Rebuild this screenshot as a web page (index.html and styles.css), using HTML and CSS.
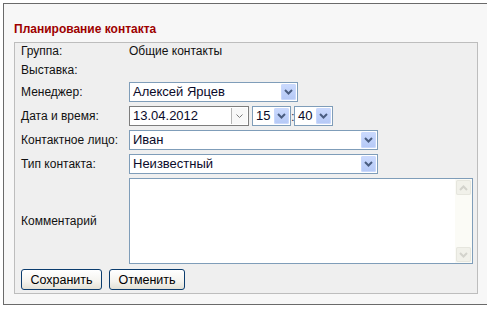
FILE: index.html
```html
<!DOCTYPE html>
<html lang="ru">
<head>
  <meta charset="UTF-8">
  <title>Планирование контакта</title>
  <link rel="stylesheet" href="styles.css">
</head>
<body>
  <div class="panel">
    <div class="title">Планирование контакта</div>

    <div class="box">
      <!-- Form rows -->
      <div class="form">
        <div class="label">Группа:</div>
        <div class="value">Общие контакты</div>

        <div class="label">Выставка:</div>
        <div class="value"></div>

        <div class="label">Менеджер:</div>
        <div class="select manager">
          <span class="select-text">Алексей Ярцев</span>
          <span class="arrow"><svg width="9" height="6" viewBox="0 0 9 6"><path d="M1 1 L4.5 4.5 L8 1" fill="none" stroke="#4a5d80" stroke-width="2"/></svg></span>
        </div>

        <div class="label">Дата и время:</div>
        <div class="datetime">
          <div class="date">
            <span class="select-text">13.04.2012</span>
            <span class="date-arrow"><svg width="7" height="5" viewBox="0 0 7 5"><path d="M0.5 0.5 L3.5 3.5 L6.5 0.5" fill="none" stroke="#7b7b7b" stroke-width="1"/></svg></span>
          </div>
          <div class="select time">
            <span class="select-text">15</span>
            <span class="arrow"><svg width="9" height="6" viewBox="0 0 9 6"><path d="M1 1 L4.5 4.5 L8 1" fill="none" stroke="#4a5d80" stroke-width="2"/></svg></span>
          </div>
          <span class="colon">:</span>
          <div class="select time">
            <span class="select-text">40</span>
            <span class="arrow"><svg width="9" height="6" viewBox="0 0 9 6"><path d="M1 1 L4.5 4.5 L8 1" fill="none" stroke="#4a5d80" stroke-width="2"/></svg></span>
          </div>
        </div>

        <div class="label">Контактное лицо:</div>
        <div class="select wide">
          <span class="select-text">Иван</span>
          <span class="arrow"><svg width="9" height="6" viewBox="0 0 9 6"><path d="M1 1 L4.5 4.5 L8 1" fill="none" stroke="#4a5d80" stroke-width="2"/></svg></span>
        </div>

        <div class="label">Тип контакта:</div>
        <div class="select wide">
          <span class="select-text">Неизвестный</span>
          <span class="arrow"><svg width="9" height="6" viewBox="0 0 9 6"><path d="M1 1 L4.5 4.5 L8 1" fill="none" stroke="#4a5d80" stroke-width="2"/></svg></span>
        </div>

        <div class="label">Комментарий</div>
        <div class="textarea">
          <div class="text-body"></div>
          <div class="scrollbar">
            <span class="scroll-btn"><svg width="9" height="6" viewBox="0 0 9 6"><path d="M1 5 L4.5 1.5 L8 5" fill="none" stroke="#d3d3cc" stroke-width="2"/></svg></span>
            <span class="scroll-btn"><svg width="9" height="6" viewBox="0 0 9 6"><path d="M1 1 L4.5 4.5 L8 1" fill="none" stroke="#d3d3cc" stroke-width="2"/></svg></span>
          </div>
        </div>
      </div>

      <!-- Buttons -->
      <div class="buttons">
        <button class="button save">Сохранить</button>
        <button class="button cancel">Отменить</button>
      </div>
    </div>
  </div>
</body>
</html>
```

FILE: styles.css
```css
body {
  margin: 3px;
  background: #ffffff;
  font-family: "Liberation Sans", Arial, sans-serif;
  font-size: 12px;
  color: #111111;
}

.panel {
  width: 486px;
  box-sizing: border-box;
  border: 1px solid #6a6a6a;
  background: #f7f7f7;
  padding: 10px;
}

.title {
  margin-top: 8px;
  margin-bottom: 6px;
  font-weight: bold;
  font-size: 12px;
  line-height: 14px;
  color: #9e0000;
}

.box {
  border: 1px solid #bdbdbd;
  background: #efefef;
  padding: 0 4px 3px 6px;
}

.form {
  display: grid;
  grid-template-columns: 108px 1fr;
  grid-template-rows: 15px 16px 20px 20px 20px 20px 86px;
  row-gap: 4px;
  align-items: center;
}

.label,
.value {
  line-height: 14px;
}

.select,
.date {
  display: flex;
  height: 20px;
  box-sizing: border-box;
  border: 1px solid #7f9db9;
  background: #ffffff;
}

.select-text {
  flex: 1;
  padding-left: 3px;
  font-size: 13px;
  line-height: 18px;
  color: #0a0a2a;
  white-space: nowrap;
  overflow: hidden;
}

.arrow {
  width: 15px;
  margin: 1px;
  border-radius: 2px;
  background: linear-gradient(#cbdafe, #b4c8f6);
  box-shadow: inset 0 0 0 1px #c9d8fc;
  display: flex;
  align-items: center;
  justify-content: center;
}

.manager {
  width: 169px;
}

.wide {
  width: 249px;
}

.datetime {
  display: flex;
  align-items: center;
}

.date {
  width: 120px;
  border-color: #7d7d7d;
}

.date-arrow {
  width: 15px;
  margin: 1px;
  border-left: 1px solid #b5b5b5;
  background: #f8f8f8;
  display: flex;
  align-items: center;
  justify-content: center;
}

.time {
  width: 39px;
  margin-left: 3px;
}

.colon {
  width: 3px;
  font-size: 13px;
  color: #333355;
}

.datetime .colon + .time {
  margin-left: 0;
}

.textarea {
  display: flex;
  height: 86px;
  box-sizing: border-box;
  border: 1px solid #7f9db9;
  background: #ffffff;
}

.text-body {
  flex: 1;
}

.scrollbar {
  width: 17px;
  background: #fbfbf6;
  display: flex;
  flex-direction: column;
  justify-content: space-between;
  padding: 1px 0;
}

.scroll-btn {
  width: 15px;
  height: 15px;
  margin-left: 1px;
  border-radius: 2px;
  background: #f1f1ea;
  box-shadow: inset 0 0 0 1px #e6e6de;
  display: flex;
  align-items: center;
  justify-content: center;
}

.buttons {
  display: flex;
  gap: 7px;
  margin-top: 5px;
}

.button {
  height: 21px;
  padding: 0;
  border: 1px solid #0b3c6e;
  border-radius: 3px;
  background: linear-gradient(#ffffff, #f4f3ee 60%, #e3e1d6);
  font-family: "Liberation Sans", Arial, sans-serif;
  font-size: 12.5px;
  color: #000000;
}

.save {
  width: 81px;
}

.cancel {
  width: 76px;
}
```
